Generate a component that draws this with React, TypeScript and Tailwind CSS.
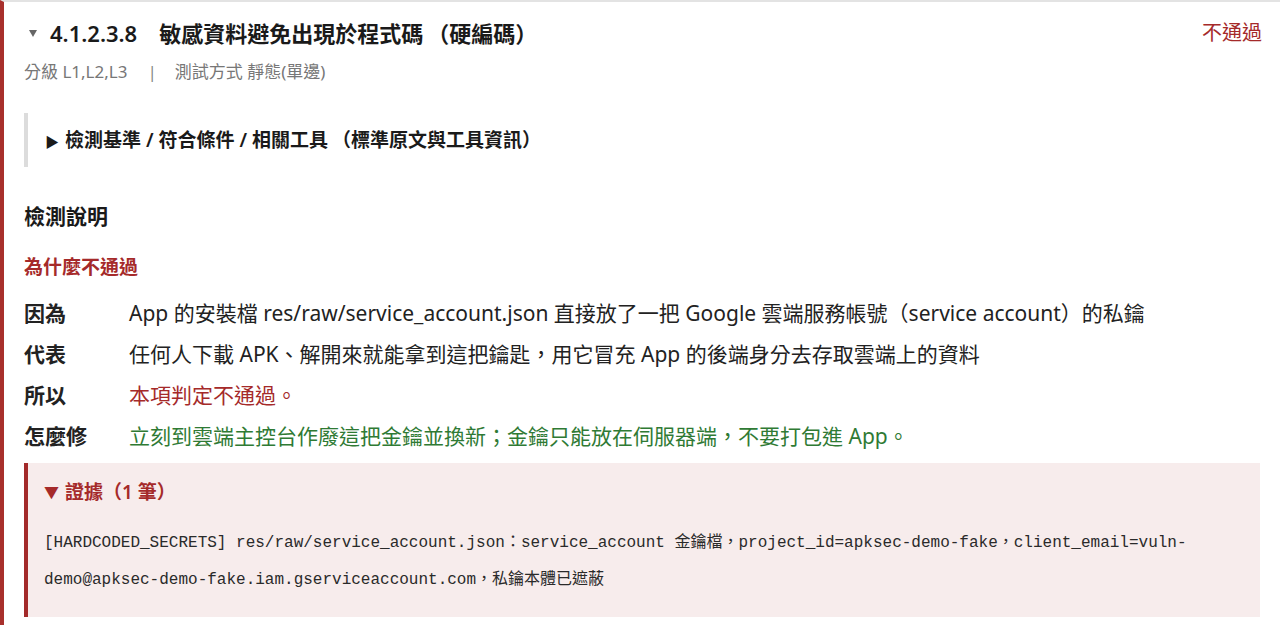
import React from "react";

const sans = '"Noto Sans", "Noto Sans CJK TC", sans-serif';
const mono = '"Liberation Mono", "Noto Sans CJK TC", monospace';

function Row({ label, children, color }: { label: string; children: React.ReactNode; color: string }) {
  return (
    <div className="flex h-[41px] items-center">
      <div className="w-[105px] shrink-0 text-[21px] font-bold text-[#222]">{label}</div>
      <div className={`text-[21px] ${color}`}>{children}</div>
    </div>
  );
}

export default function App() {
  return (
    <div className="min-h-screen bg-white" style={{ fontFamily: sans }}>
      <div className="border-l-4 border-t-2 border-l-[#a8302c] border-t-[#e3e3e3] pl-5 pr-5 pt-[17px] pb-[8px]">
        {/* Title row */}
        <div className="flex h-[28px] items-center justify-between">
          <div className="flex shrink-0 items-center whitespace-nowrap">
            <svg width="8" height="7" viewBox="0 0 8 7" className="ml-[5px] mr-[13px]">
              <path d="M0 0 L8 0 L4 7 Z" fill="#666" />
            </svg>
            <span className="text-[22px] font-semibold leading-[28px] text-[#1a1a1a]">4.1.2.3.8</span>
            <span className="ml-[22px] whitespace-nowrap text-[22px] font-semibold leading-[28px] text-[#1a1a1a]">
              敏感資料避免出現於程式碼<span className="ml-[4px]">（</span>硬編碼<span>）</span>
            </span>
          </div>
          <div className="mr-[-2px] whitespace-nowrap text-[20px] leading-[28px] text-[#a52a2a]">不通過</div>
        </div>

        {/* Subtitle */}
        <div className="mt-[13px] flex h-[24px] items-center text-[17px] text-[#777]">
          <span>分級 L1,L2,L3</span>
          <span className="ml-[20px] mr-[18px] text-[#888]">|</span>
          <span>測試方式 靜態(單邊)</span>
        </div>

        {/* Collapsible */}
        <div className="mt-[29px] flex h-[54px] items-center border-l-4 border-[#dcdcdc] pl-[17px]">
          <span className="whitespace-nowrap text-[19px] font-semibold text-[#1a1a1a]">
            <span className="mr-[6px] text-[14px]">▶</span>檢測基準 / 符合條件 / 相關工具<span className="ml-[4px]">（</span>標準原文與工具資訊）
          </span>
        </div>

        {/* Section heading */}
        <div className="mt-[34px] h-[30px] text-[21px] font-bold leading-[30px] text-[#1a1a1a]">檢測說明</div>
        <div className="mt-[22px] h-[28px] text-[19px] font-semibold leading-[28px] text-[#a52a2a]">為什麼不通過</div>

        <div className="mt-[12px]">
          <Row label="因為" color="text-[#222]">
            App 的安裝檔 res/raw/service_account.json 直接放了一把 Google 雲端服務帳號（service account）的私鑰
          </Row>
          <Row label="代表" color="text-[#222]">
            任何人下載 APK、解開來就能拿到這把鑰匙，用它冒充 App 的後端身分去存取雲端上的資料
          </Row>
          <Row label="所以" color="text-[#a52a2a]">
            本項判定不通過。
          </Row>
          <Row label="怎麼修" color="text-[#2f7a34]">
            立刻到雲端主控台作廢這把金鑰並換新；金鑰只能放在伺服器端，不要打包進 App。
          </Row>
        </div>

        {/* Evidence */}
        <div className="mt-[6px] border-l-4 border-[#a32a2a] bg-[#f7ecec] pl-4 pr-5 pt-[17px] pb-[18px]">
          <div className="flex h-[24px] items-center text-[19px] font-semibold text-[#a52a2a]">
            <span className="mr-[6px] text-[15px]">▼</span>證據（1 筆）
          </div>
          <div className="mt-[21px] text-[16px] leading-[37px] text-[#2a2a2a]" style={{ fontFamily: mono }}>
            [HARDCODED_SECRETS] res/raw/service_account.json：service_account 金鑰檔，project_id=apksec-demo-fake，client_email=vuln-demo@apksec-demo-fake.iam.gserviceaccount.com，私鑰本體已遮蔽
          </div>
        </div>
      </div>
    </div>
  );
}
